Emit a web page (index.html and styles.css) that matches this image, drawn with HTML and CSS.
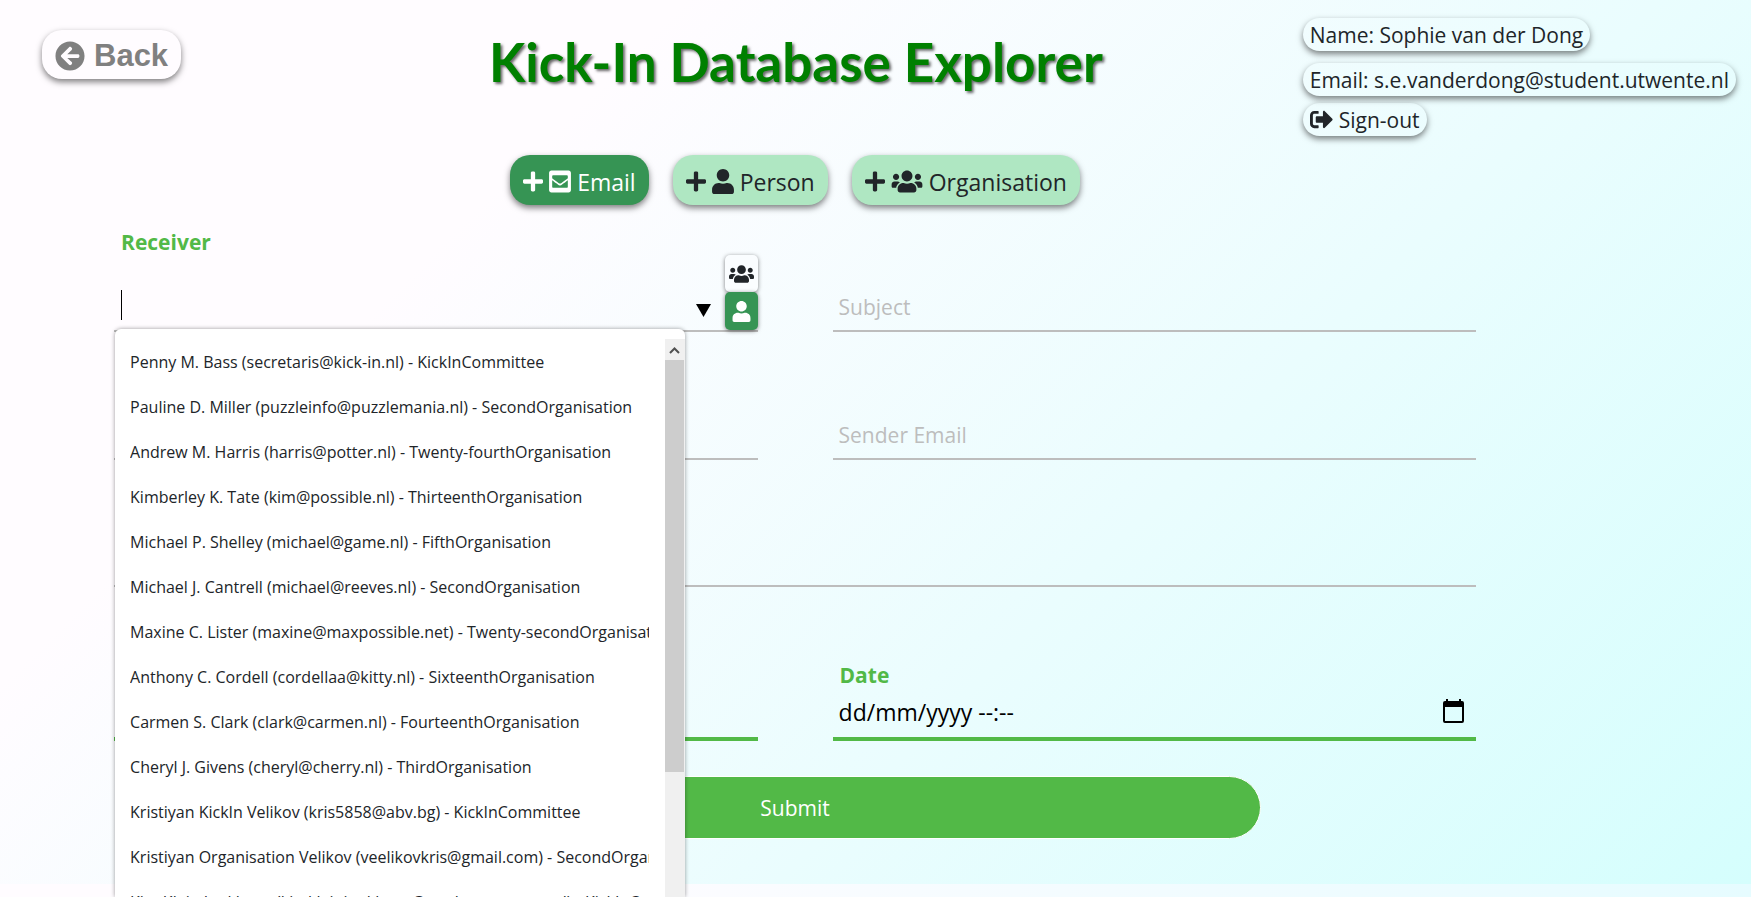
FILE: index.html
```html
<!DOCTYPE html>
<html lang="en">
<head>
<meta charset="utf-8">
<meta name="viewport" content="width=device-width, initial-scale=1">
<title>Kick-In Database Explorer</title>
<link rel="stylesheet" href="styles.css">
</head>
<body>
<svg class="sprite" aria-hidden="true">
  <symbol id="plus" viewBox="0 0 448 512"><path d="M416 208H272V64c0-17.67-14.33-32-32-32h-32c-17.67 0-32 14.33-32 32v144H32c-17.67 0-32 14.33-32 32v32c0 17.67 14.33 32 32 32h144v144c0 17.67 14.33 32 32 32h32c17.67 0 32-14.33 32-32V304h144c17.67 0 32-14.33 32-32v-32c0-17.67-14.33-32-32-32z"/></symbol>
  <symbol id="user" viewBox="0 0 448 512"><path d="M224 256c70.700 0 128-57.300 128-128S294.700 0 224 0 96 57.300 96 128s57.300 128 128 128zm89.600 32h-16.700c-22.200 10.200-46.900 16-72.900 16s-50.600-5.800-72.900-16h-16.700C60.200 288 0 348.200 0 422.400V464c0 26.500 21.500 48 48 48h352c26.500 0 48-21.500 48-48v-41.600c0-74.200-60.200-134.400-134.400-134.400z"/></symbol>
  <symbol id="users" viewBox="0 0 640 512"><path d="M96 224c35.300 0 64-28.700 64-64s-28.700-64-64-64-64 28.700-64 64 28.700 64 64 64zm448 0c35.300 0 64-28.700 64-64s-28.700-64-64-64-64 28.700-64 64 28.700 64 64 64zm32 32h-64c-17.600 0-33.500 7.100-45.100 18.600 40.300 22.100 68.900 62 75.100 109.400h66c17.700 0 32-14.300 32-32v-32c0-35.300-28.700-64-64-64zm-256 0c61.900 0 112-50.100 112-112S381.900 32 320 32 208 82.100 208 144s50.100 112 112 112zm76.800 32h-8.300c-20.800 10-43.900 16-68.500 16s-47.600-6-68.500-16h-8.300C179.600 288 128 339.600 128 403.200V432c0 26.500 21.500 48 48 48h288c26.500 0 48-21.500 48-48v-28.800c0-63.600-51.600-115.200-115.200-115.200zm-223.700-13.400C161.500 263.100 145.600 256 128 256H64c-35.300 0-64 28.700-64 64v32c0 17.700 14.300 32 32 32h65.900c6.300-47.400 34.900-87.300 75.200-109.400z"/></symbol>
</svg>

<div class="page">
<header class="top">
  <div class="top-back">
    <button class="back" type="button">
      <svg class="icon-30" viewBox="0 0 512 512" aria-hidden="true"><path d="M256 504C119 504 8 393 8 256S119 8 256 8s248 111 248 248-111 248-248 248zm28.900-143.600L209.400 288H392c13.300 0 24-10.700 24-24v-16c0-13.300-10.700-24-24-24H209.400l75.500-72.400c9.700-9.300 9.900-24.800.4-34.300l-11-10.900c-9.400-9.400-24.600-9.400-33.900 0L107.700 239c-9.400 9.400-9.400 24.600 0 33.900l132.700 132.700c9.400 9.400 24.600 9.400 33.900 0l11-10.900c9.500-9.500 9.300-25-.4-34.300z"/></svg>
      Back
    </button>
  </div>
  <h1 class="title">Kick-In Database Explorer</h1>
  <div class="account">
    <span class="pill">Name: Sophie van der Dong</span>
    <span class="pill">Email: s.e.vanderdong@student.utwente.nl</span>
    <button class="pill sign-out" type="button">
      <svg class="icon-24" viewBox="0 0 512 512" aria-hidden="true"><path d="M497 273L329 441c-15 15-41 4.500-41-17v-96H152c-13.300 0-24-10.700-24-24v-96c0-13.300 10.700-24 24-24h136V88c0-21.400 25.900-32 41-17l168 168c9.300 9.400 9.300 24.600 0 34zM192 436v-40c0-6.600-5.400-12-12-12H96c-17.700 0-32-14.300-32-32V160c0-17.700 14.300-32 32-32h84c6.600 0 12-5.400 12-12V76c0-6.600-5.400-12-12-12H96c-53 0-96 43-96 96v192c0 53 43 96 96 96h84c6.600 0 12-5.400 12-12z"/></svg>
      Sign-out
    </button>
  </div>
</header>

<main class="content">
  <nav class="tabs" aria-label="Add">
    <button class="tab tab-active" type="button">
      <svg class="icon-tab" viewBox="0 0 448 512" aria-hidden="true"><use href="#plus"/></svg>
      <svg class="icon-wide" viewBox="0 0 448 512" aria-hidden="true"><path fill-rule="evenodd" d="M48 32h352c26.500 0 48 21.500 48 48v352c0 26.500-21.500 48-48 48H48c-26.500 0-48-21.500-48-48V80c0-26.500 21.500-48 48-48zm16 117v38c20 16 50 39 104 79 13 10 36 32 56 32s43-22 56-32c54-40 84-63 104-79v-38c0-11-9-21-21-21H85c-12 0-21 10-21 21zm0 79v135c0 12 9 21 21 21h278c12 0 21-9 21-21V228c-20 16-44 34-84 64-17 13-46 44-76 44s-60-31-76-44c-40-30-64-48-84-64z"/></svg>
      Email
    </button>
    <button class="tab" type="button">
      <svg class="icon-tab" viewBox="0 0 448 512" aria-hidden="true"><use href="#plus"/></svg>
      <svg class="icon-wide" viewBox="0 0 448 512" aria-hidden="true"><use href="#user"/></svg>
      Person
    </button>
    <button class="tab" type="button">
      <svg class="icon-tab" viewBox="0 0 448 512" aria-hidden="true"><use href="#plus"/></svg>
      <svg class="icon-group" viewBox="0 0 640 512" aria-hidden="true"><use href="#users"/></svg>
      Organisation
    </button>
  </nav>

  <form class="form">
    <div class="field field-receiver">
      <label class="label" for="receiver">Receiver</label>
      <div class="combo">
        <span class="caret"></span>
        <input class="input" id="receiver" type="text" autocomplete="off">
        <svg class="arrow" viewBox="0 0 15 13" aria-hidden="true"><path d="M0 0h15L7.500 13z"/></svg>
        <div class="modes">
          <button class="mode" type="button" aria-label="Organisations"><svg class="mode-group" viewBox="0 0 640 512" aria-hidden="true"><use href="#users"/></svg></button>
          <button class="mode mode-active" type="button" aria-label="Persons"><svg class="mode-user" viewBox="0 0 448 512" aria-hidden="true"><use href="#user"/></svg></button>
        </div>
      </div>
      <div class="dropdown">
        <ul class="options">
          <li>Penny M. Bass (secretaris@kick-in.nl) - KickInCommittee</li>
          <li>Pauline D. Miller (puzzleinfo@puzzlemania.nl) - SecondOrganisation</li>
          <li>Andrew M. Harris (harris@potter.nl) - Twenty-fourthOrganisation</li>
          <li>Kimberley K. Tate (kim@possible.nl) - ThirteenthOrganisation</li>
          <li>Michael P. Shelley (michael@game.nl) - FifthOrganisation</li>
          <li>Michael J. Cantrell (michael@reeves.nl) - SecondOrganisation</li>
          <li>Maxine C. Lister (maxine@maxpossible.net) - Twenty-secondOrganisation</li>
          <li>Anthony C. Cordell (cordellaa@kitty.nl) - SixteenthOrganisation</li>
          <li>Carmen S. Clark (clark@carmen.nl) - FourteenthOrganisation</li>
          <li>Cheryl J. Givens (cheryl@cherry.nl) - ThirdOrganisation</li>
          <li>Kristiyan KickIn Velikov (kris5858@abv.bg) - KickInCommittee</li>
          <li>Kristiyan Organisation Velikov (veelikovkris@gmail.com) - SecondOrganisation</li>
          <li>Kim Klein Jonkhans (kimkleinjonkhans@student.utwente.nl) - KickInCommittee</li>
        </ul>
        <div class="scroll" aria-hidden="true">
          <svg class="scroll-up" viewBox="0 0 19 21"><path d="M5 14l4.500-4.500L14 14" fill="none" stroke="#505050" stroke-width="2"/></svg>
          <div class="scroll-thumb"></div>
        </div>
      </div>
    </div>
    <div class="field"><input class="input" type="text" placeholder="Subject" aria-label="Subject"></div>
    <div class="field"><input class="input" type="text" aria-label="Sender Name"></div>
    <div class="field"><input class="input" type="email" placeholder="Sender Email" aria-label="Sender Email"></div>
    <div class="field field-full"><input class="input" type="text" aria-label="Message"></div>
    <div class="field field-date"><input class="input" type="text" aria-label="Type"></div>
    <div class="field field-date">
      <label class="label" for="date">Date</label>
      <div class="date-row">
        <input class="input" id="date" type="text" value="dd/mm/yyyy --:--">
        <svg class="calendar" viewBox="0 0 21 24" aria-hidden="true"><path fill-rule="evenodd" d="M3 0h2v2h11V0h2v2h1a2 2 0 0 1 2 2v18a2 2 0 0 1-2 2H2a2 2 0 0 1-2-2V4a2 2 0 0 1 2-2h1zM2 8v14h17V8z"/></svg>
      </div>
    </div>
    <button class="submit" type="submit">Submit</button>
  </form>
</main>
</div>
</body>
</html>
```

FILE: styles.css
```css
* {
  box-sizing: border-box;
}

body {
  min-height: 100vh;
  margin: 0;
  color: #212529;
  background: linear-gradient(90deg, #fffcff 30%, #e6fcff 100%);
  font-family: "Segoe UI", "Open Sans", "Noto Sans", sans-serif;
  font-size: 21px;
}

.page {
  padding-bottom: 45px;
  background-color: #d5fefd;
  background-image: linear-gradient(315deg, #d5fefd 0%, #fffcff 74%);
}

button,
input {
  font: inherit;
  color: inherit;
}

svg {
  display: block;
  flex: none;
  fill: currentColor;
}

.sprite {
  position: absolute;
  width: 0;
  height: 0;
}

.top {
  display: grid;
  grid-template-columns: 165fr 579fr 256fr;
  align-items: start;
  height: 155px;
}

.top-back {
  padding: 30px 0 0 42px;
}

.back {
  display: flex;
  align-items: center;
  gap: 9px;
  height: 49px;
  padding: 2px 13px 0;
  border: 0;
  border-radius: 20px;
  color: #808080;
  background: #fffcff;
  box-shadow: 0 3px 6px rgba(0, 0, 0, 0.5);
  font: bold 31px "Liberation Sans", Arial, sans-serif;
}

.icon-30 {
  width: 30px;
  height: 30px;
}

.title {
  margin: 0;
  padding-top: 28px;
  color: #008000;
  text-align: center;
  text-shadow: 2px 2px 3px rgba(0, 0, 0, 0.6);
  font: bold 53px/68px "Comic Sans MS", Lato, sans-serif;
  white-space: nowrap;
}

.account {
  display: flex;
  flex-direction: column;
  align-items: flex-start;
  padding-top: 18px;
}

.pill {
  height: 33px;
  margin-bottom: 12px;
  padding: 0 7px;
  border: 0;
  border-radius: 17px;
  background: transparent;
  box-shadow: 0 3px 6px rgba(0, 0, 0, 0.5);
  line-height: 34px;
  white-space: nowrap;
}

.sign-out {
  display: flex;
  align-items: center;
  gap: 6px;
  margin-top: -5px;
}

.icon-24 {
  width: 23px;
  height: 23px;
}

.content {
  width: 78.3%;
  margin-left: 6%;
  padding-left: 9px;
}

.tabs {
  display: flex;
  justify-content: center;
  gap: 24px;
}

.tab {
  display: flex;
  align-items: center;
  gap: 6px;
  height: 50px;
  padding: 3px 13px 0;
  border: 0;
  border-radius: 20px;
  background: #afe7c2;
  box-shadow: 0 3px 6px rgba(0, 0, 0, 0.5);
  font-size: 23px;
}

.tab-active {
  color: #fff;
  background: #369454;
}

.icon-tab {
  width: 20px;
  height: 23px;
}

.icon-wide {
  width: 22px;
  height: 25px;
}

.icon-group {
  width: 32px;
  height: 25px;
}

.form {
  display: grid;
  grid-template-columns: 1fr 1fr;
  column-gap: 75px;
}

.field {
  display: flex;
  flex-direction: column;
  justify-content: flex-end;
  height: 128px;
  border-bottom: 2px solid #bdbdbd;
}

.field-receiver {
  position: relative;
}

.field-full {
  grid-column: 1 / -1;
  height: 127px;
}

.form > .field:nth-child(-n + 2) {
  height: 127px;
}

.field-date {
  height: 154px;
  border-bottom: 4px solid #52b947;
}

.label {
  padding-left: 7px;
  color: #52b947;
  font-size: 21px;
  font-weight: bold;
  line-height: 32px;
}

.field-receiver .label {
  margin-bottom: 21px;
}

.input {
  flex: none;
  width: 100%;
  min-width: 0;
  height: 46px;
  padding: 0 6px;
  border: 0;
  outline: 0;
  background: transparent;
}

.input::placeholder {
  color: #bdbdbd;
  opacity: 1;
}

.combo,
.date-row {
  display: flex;
  align-items: center;
}

.combo .input,
.date-row .input {
  flex: 1;
}

.caret {
  width: 1px;
  height: 30px;
  margin-left: 7px;
  background: #000;
}

.combo {
  height: 51px;
}

.arrow {
  width: 15px;
  height: 13px;
  margin: 12px 14px 0 0;
  color: #000;
}

.modes {
  align-self: flex-end;
}

.mode {
  display: flex;
  align-items: center;
  justify-content: center;
  width: 33px;
  height: 37px;
  padding: 0;
  border: 0;
  border-radius: 5px;
  background: #fafdff;
  box-shadow: 0 1px 4px rgba(0, 0, 0, 0.5);
}

.mode-active {
  height: 38px;
  color: #fff;
  background: #369454;
}

.mode-group {
  width: 25px;
  height: 20px;
}

.mode-user {
  width: 19px;
  height: 21px;
}

.dropdown {
  position: absolute;
  z-index: 2;
  top: 124px;
  left: 1px;
  display: flex;
  width: 570px;
  height: 568px;
  padding-top: 10px;
  border-radius: 6px 6px 0 0;
  background: #fff;
  box-shadow: 0 0 4px rgba(0, 0, 0, 0.4);
  overflow: hidden;
}

.options {
  flex: 1;
  min-width: 0;
  margin: 0;
  padding: 1px 16px 0 15px;
  list-style: none;
  font-size: 16px;
}

.options li {
  height: 45px;
  line-height: 45px;
  white-space: nowrap;
  overflow: hidden;
}

.scroll {
  width: 20px;
  padding-right: 1px;
  background: #f0f0f0;
}

.scroll-up {
  width: 19px;
  height: 21px;
}

.scroll-thumb {
  height: 412px;
  background: #cdcdcd;
}

.date-row {
  height: 46px;
  padding-right: 12px;
  color: #000;
}

.date-row .input {
  padding-bottom: 4px;
  font-size: 23px;
}

.calendar {
  width: 21px;
  height: 24px;
  margin-bottom: 6px;
}

.submit {
  grid-column: 1 / -1;
  justify-self: center;
  width: 68.4%;
  height: 63px;
  margin-top: 35px;
  border: 1px solid #fff;
  border-radius: 32px;
  color: #fff;
  background: #52b947;
}
```
